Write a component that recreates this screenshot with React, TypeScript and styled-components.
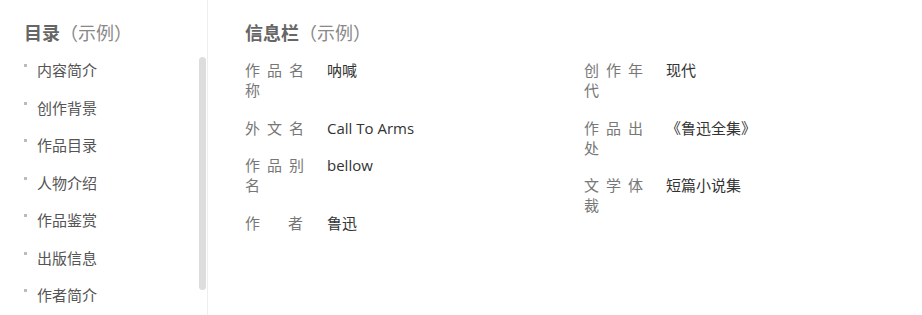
import React from "react";
import styled, { createGlobalStyle } from "styled-components";

const GlobalStyle = createGlobalStyle`
  html, body {
    margin: 0;
    padding: 0;
    background: #fff;
  }
  body {
    font-family: "Open Sans", "Noto Sans CJK SC", sans-serif;
    color: #333;
  }
`;

interface InfoItem {
  label: string;
  value: string;
  wide?: boolean;
}

const catalog = [
  "内容简介",
  "创作背景",
  "作品目录",
  "人物介绍",
  "作品鉴赏",
  "出版信息",
  "作者简介",
];

const leftInfo: InfoItem[] = [
  { label: "作品名称", value: "呐喊" },
  { label: "外文名", value: "Call To Arms" },
  { label: "作品别名", value: "bellow" },
  { label: "作者", value: "鲁迅", wide: true },
];

const rightInfo: InfoItem[] = [
  { label: "创作年代", value: "现代" },
  { label: "作品出处", value: "《鲁迅全集》" },
  { label: "文学体裁", value: "短篇小说集" },
];

export default function App() {
  return (
    <>
      <GlobalStyle />
      <Page>
        <Sidebar>
          <Catalog>
            <Heading>
              <Strong>目录</Strong>
              <Light>（示例）</Light>
            </Heading>
            <CatalogList>
              {catalog.map((item) => (
                <CatalogItem key={item}>
                  <Bullet />
                  {item}
                </CatalogItem>
              ))}
            </CatalogList>
          </Catalog>
          <ScrollTrack>
            <ScrollThumb />
          </ScrollTrack>
        </Sidebar>
        <Main>
          <Heading>
            <Strong>信息栏</Strong>
            <Light>（示例）</Light>
          </Heading>
          <InfoGrid>
            {[leftInfo, rightInfo].map((col, i) => (
              <InfoColumn key={i}>
                {col.map((item) => (
                  <InfoRow key={item.label}>
                    <Label $wide={item.wide}>{item.label}</Label>
                    <Value>{item.value}</Value>
                  </InfoRow>
                ))}
              </InfoColumn>
            ))}
          </InfoGrid>
        </Main>
      </Page>
    </>
  );
}

const Page = styled.div`
  display: flex;
  width: 922px;
  height: 315px;
  overflow: hidden;
`;
const Sidebar = styled.div`
  display: flex;
  width: 207px;
  flex-shrink: 0;
  border-right: 1px solid #eeeeee;
`;
const Catalog = styled.div`
  flex: 1;
  padding: 20px 0 0 24px;
`;
const Heading = styled.div`
  font-size: 18px;
  line-height: 26px;
  height: 26px;
  color: #666;
  white-space: nowrap;
`;
const Strong = styled.span`
  font-weight: 700;
`;
const Light = styled.span`
  font-weight: 400;
  color: #888;
`;
const CatalogList = styled.ul`
  list-style: none;
  margin: 5px 0 0;
  padding: 0;
`;
const CatalogItem = styled.li`
  display: flex;
  align-items: center;
  height: 37.5px;
  font-size: 15px;
  color: #555;
`;
const Bullet = styled.span`
  width: 3px;
  height: 3px;
  background: #bbb;
  margin: 0 10px 0 0;
  align-self: center;
  position: relative;
  top: -4px;
`;
const ScrollTrack = styled.div`
  width: 7px;
  padding: 57px 1px 0 0;
`;
const ScrollThumb = styled.div`
  height: 233px;
  width: 7px;
  border-radius: 4px;
  background: #dddddd;
`;
const Main = styled.div`
  flex: 1;
  padding: 20px 0 0 37px;
`;
const InfoGrid = styled.div`
  display: grid;
  grid-template-columns: 339px 339px;
  margin-top: 14px;
`;
const InfoColumn = styled.div`
  display: flex;
  flex-direction: column;
  gap: 17.5px;
`;
const InfoRow = styled.div`
  display: flex;
  font-size: 15px;
  line-height: 20px;
`;
const Label = styled.div<{ $wide?: boolean }>`
  width: ${(p) => (p.$wide ? "58px" : "70px")};
  margin-right: ${(p) => (p.$wide ? "24px" : "12px")};
  flex-shrink: 0;
  color: #777;
  letter-spacing: ${(p) => (p.$wide ? "0" : "7px")};
  text-align: ${(p) => (p.$wide ? "justify" : "left")};
  text-align-last: ${(p) => (p.$wide ? "justify" : "auto")};
  word-break: break-all;
`;
const Value = styled.div`
  color: #333;
`;
